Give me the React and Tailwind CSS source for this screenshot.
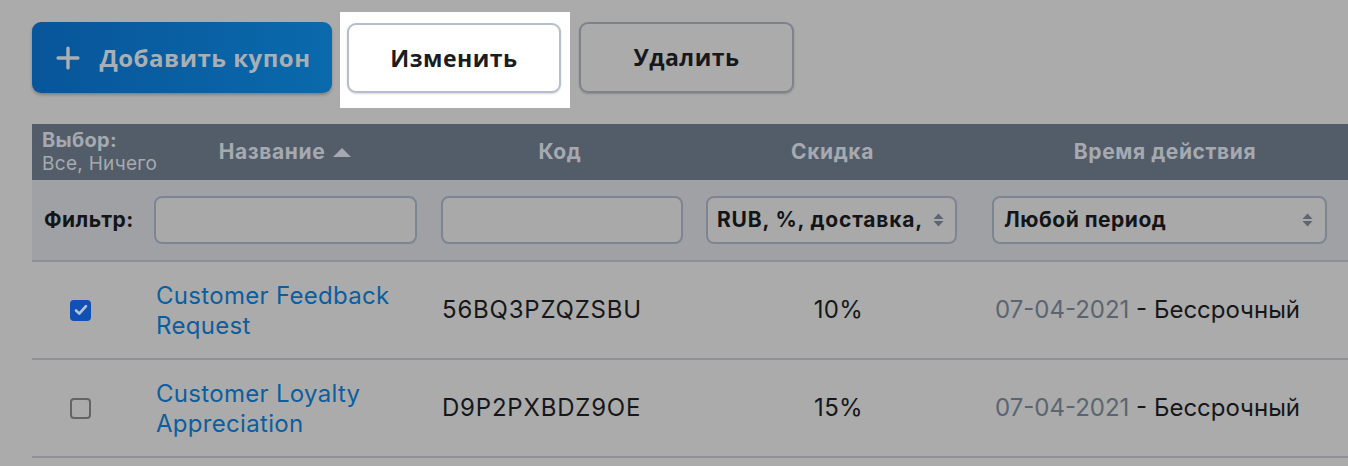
import { Plus } from 'lucide-react'

const rows = [
  { name: ['Customer Feedback', 'Request'], code: '56BQ3PZQZSBU', discount: '10%', checked: true },
  { name: ['Customer Loyalty', 'Appreciation'], code: 'D9P2PXBDZ9OE', discount: '15%', checked: false },
]

const cols = 'grid grid-cols-[108px_290px_260px_285px_380px]'

const SelectArrows = () => (
  <svg width="11" height="14" viewBox="0 0 11 14" className="shrink-0">
    <path d="M5.5 0.5 L10.5 6 L0.5 6 Z" fill="#5d6673" />
    <path d="M5.5 13.5 L10.5 8 L0.5 8 Z" fill="#5d6673" />
  </svg>
)

const Checkbox = ({ checked }) =>
  checked ? (
    <div className="w-[21px] h-[21px] rounded-[4px] bg-[#1150b5] flex items-center justify-center">
      <svg width="14" height="12" viewBox="0 0 14 12">
        <path d="M2 6.5 L5.3 9.6 L12 2.2" stroke="#b9c3d6" strokeWidth="2.6" fill="none" strokeLinecap="round" strokeLinejoin="round" />
      </svg>
    </div>
  ) : (
    <div className="w-[21px] h-[21px] rounded-[4px] border-2 border-[#626466] bg-[#ababab]" />
  )

export default function App() {
  return (
    <div className="w-[1348px] h-[466px] overflow-hidden bg-[#ababab] font-['Inter',sans-serif]">
      {/* Toolbar */}
      <div className="flex items-start pt-[12px] pl-[32px] font-['Open_Sans',sans-serif] font-bold tracking-[0.5px]">
        <button className="mt-[10px] w-[300px] h-[71px] rounded-[9px] bg-gradient-to-r from-[#08559a] to-[#0a6aab] shadow-[0_2px_3px_rgba(0,0,0,0.25)] flex items-center justify-center gap-[14px] text-[#a9afb5] text-[24px]">
          <Plus size={34} strokeWidth={2.4} className="-ml-[2px]" />
          <span>Добавить купон</span>
        </button>
        <div className="ml-[8px] bg-white pt-[11px] pb-[15px] pl-[7px] pr-[9px]">
          <button className="w-[214px] h-[70px] rounded-[9px] bg-white border-2 border-[#b3bfcd] shadow-[0_1px_2px_rgba(0,0,0,0.15)] text-[#1b1c1f] text-[23px]">
            Изменить
          </button>
        </div>
        <button className="ml-[9px] mt-[10px] w-[215px] h-[71px] rounded-[9px] border-2 border-[#7e838b] shadow-[0_1px_2px_rgba(0,0,0,0.2)] text-[#17181b] text-[23px]">
          Удалить
        </button>
      </div>

      {/* Table */}
      <div className="mt-[16px] ml-[32px] w-[1323px]">
        <div className={`${cols} h-[56px] bg-[#535d6a] text-[#a6aab0] font-bold text-[21px] tracking-[0.6px]`}>
          <div className="pl-[10px] pt-[5px] leading-[23px] whitespace-nowrap tracking-[0.3px]">
            <div className="text-[20px]">Выбор:</div>
            <div className="text-[19px] font-normal">Все, Ничего</div>
          </div>
          <div className="flex items-center justify-center gap-[8px]">
            <span>Название</span>
            <svg width="18" height="9" viewBox="0 0 18 9">
              <path d="M9 0 L18 9 L0 9 Z" fill="#a6aab0" />
            </svg>
          </div>
          <div className="flex items-center justify-center">Код</div>
          <div className="flex items-center justify-center">Скидка</div>
          <div className="flex items-center justify-center">Время действия</div>
        </div>

        <div className={`${cols} h-[82px] bg-[#a0a1a4] border-b-2 border-[#8e9297] items-center text-[21px] tracking-[0.5px] font-bold text-[#141518]`}>
          <div className="pl-[12px]">Фильтр:</div>
          <div className="pl-[14px]">
            <div className="w-[263px] h-[48px] rounded-[8px] border-2 border-[#7c8692] bg-[#a9a9a9]" />
          </div>
          <div className="pl-[11px]">
            <div className="w-[242px] h-[48px] rounded-[8px] border-2 border-[#7c8692] bg-[#a9a9a9]" />
          </div>
          <div className="pl-[16px]">
            <div className="w-[251px] h-[48px] rounded-[8px] border-2 border-[#7c8692] bg-[#a9a9a9] flex items-center pl-[9px] pr-[11px] gap-[6px]">
              <span className="flex-1 min-w-0 whitespace-nowrap tracking-[0.8px]">RUB, %, доставка,</span>
              <SelectArrows />
            </div>
          </div>
          <div className="pl-[17px]">
            <div className="w-[335px] h-[48px] rounded-[8px] border-2 border-[#7c8692] bg-[#a9a9a9] flex items-center pl-[10px] pr-[12px]">
              <span className="flex-1">Любой период</span>
              <SelectArrows />
            </div>
          </div>
        </div>

        {rows.map((r) => (
          <div key={r.code} className={`${cols} h-[98px] border-b-2 border-[#8e9297] items-center text-[24px] text-[#16171a]`}>
            <div className="pl-[38px]">
              <Checkbox checked={r.checked} />
            </div>
            <div className="pl-[16px] pt-[2px] leading-[30px] text-[#0c5e9f] tracking-[0.3px]">
              <div>{r.name[0]}</div>
              <div>{r.name[1]}</div>
            </div>
            <div className="pl-[12px] tracking-[0.8px]">{r.code}</div>
            <div className="text-center pl-[12px] tracking-[0.3px]">{r.discount}</div>
            <div className="pl-[20px] whitespace-nowrap">
              <span className="text-[#5a6571]">07-04-2021</span> - Бессрочный
            </div>
          </div>
        ))}
      </div>
    </div>
  )
}
